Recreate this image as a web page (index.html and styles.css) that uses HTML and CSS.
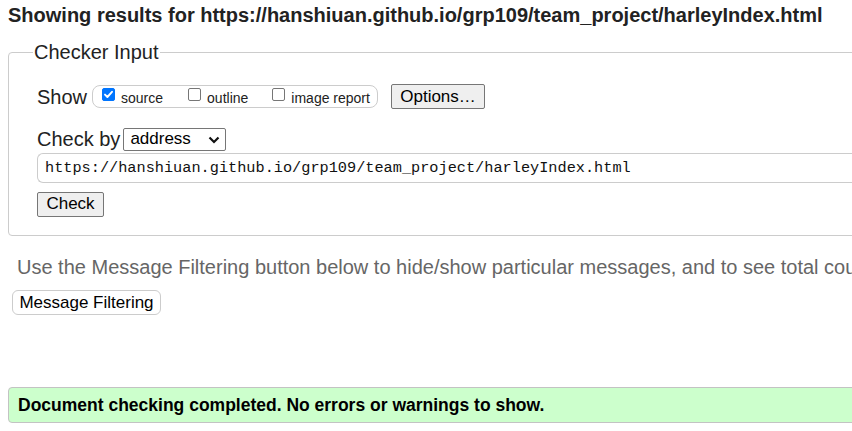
FILE: index.html
```html
<!DOCTYPE html>
<html lang="en">
<head>
<meta charset="utf-8">
<title>Showing results for https://hanshiuan.github.io/grp109/team_project/harleyIndex.html</title>
<link rel="stylesheet" href="styles.css">
</head>
<body>
<div class="page">
  <h2 class="results-title">Showing results for https://hanshiuan.github.io/grp109/team_project/harleyIndex.html</h2>
  <form class="checker">
    <fieldset class="checker-fs">
      <legend class="checker-legend">Checker Input</legend>
      <div class="row row-show">
        <span class="row-label">Show</span>
        <div class="show-group">
          <label class="opt opt-source"><span class="cb cb-on"><svg viewBox="0 0 13 13" width="13" height="13"><path d="M3 6.6 L5.4 9 L10 3.8" fill="none" stroke="#fff" stroke-width="1.9" stroke-linecap="round" stroke-linejoin="round"/></svg></span>source</label>
          <label class="opt opt-outline"><span class="cb"></span>outline</label>
          <label class="opt opt-image"><span class="cb"></span>image report</label>
        </div>
        <button type="button" class="btn btn-options">Options…</button>
      </div>
      <div class="row row-by">
        <span class="row-label">Check by</span>
        <div class="select"><span>address</span><svg class="chev" viewBox="0 0 12 8" width="12" height="8"><path d="M1.5 1.5 L6 6 L10.5 1.5" fill="none" stroke="#111" stroke-width="2.2"/></svg></div>
      </div>
      <div class="url-input">https://hanshiuan.github.io/grp109/team_project/harleyIndex.html</div>
      <div class="row row-check">
        <button type="button" class="btn btn-check">Check</button>
      </div>
    </fieldset>
  </form>
  <p class="filter-note">Use the Message Filtering button below to hide/show particular messages, and to see total counts of errors and warnings.</p>
  <button type="button" class="btn-filter">Message Filtering</button>
  <div class="success">Document checking completed. No errors or warnings to show.</div>
</div>
</body>
</html>
```
FILE: styles.css
```css
html, body {
  margin: 0;
  padding: 0;
  background: #fff;
  overflow: hidden;
}
body {
  font-family: "Liberation Sans", Arial, sans-serif;
  color: #222;
}
.page {
  width: 1100px;
  padding: 4px 0 0 8px;
}
.results-title {
  margin: 0;
  font-size: 20px;
  line-height: 23px;
  font-weight: bold;
  color: #222;
  white-space: nowrap;
}
.checker {
  margin: 14px 0 0 0;
}
.checker-fs {
  margin: 0;
  border: 1px solid #ccc;
  border-radius: 4px;
  padding: 0 0 19px 28px;
  min-width: 0;
}
.checker-legend {
  margin-left: -4px;
  padding: 0 1px;
  font-size: 20px;
  line-height: 22px;
  color: #222;
}
.row {
  display: flex;
  align-items: center;
}
.row-label {
  font-size: 20px;
  line-height: 22px;
  color: #222;
}
.row-show {
  margin-top: 21px;
  height: 25px;
}
.show-group {
  margin-left: 5px;
  height: 23px;
  box-sizing: border-box;
  border: 1px solid #ccc;
  border-radius: 8px;
  display: flex;
  align-items: center;
  padding: 0 0 0 9px;
  width: 286px;
}
.opt {
  display: flex;
  align-items: center;
  font-size: 14px;
  color: #222;
  line-height: 16px;
  padding-top: 2px;
}
.opt-source { margin-right: 25px; }
.opt-outline { margin-right: 24px; }
.cb {
  width: 13px;
  height: 13px;
  box-sizing: border-box;
  border: 1px solid #767676;
  border-radius: 2px;
  background: #fff;
  margin-right: 6px;
  margin-top: -6px;
  display: inline-flex;
}
.cb-on {
  background: #0075ff;
  border-color: #0075ff;
}
.cb svg { display: block; margin: -1px; }
.btn {
  font-family: "Liberation Sans", Arial, sans-serif;
  background: #efefef;
  border: 1px solid #767676;
  border-radius: 2px;
  color: #000;
  padding: 0;
  box-sizing: border-box;
}
.btn-options {
  margin-left: 13px;
  width: 94px;
  height: 25px;
  font-size: 17px;
}
.row-by {
  margin-top: 19px;
  height: 22px;
}
.select {
  margin-left: 3px;
  width: 103px;
  height: 23px;
  box-sizing: border-box;
  border: 1px solid #767676;
  border-radius: 2px;
  display: flex;
  align-items: center;
  justify-content: space-between;
  padding: 0 5px 0 6px;
  font-size: 17px;
  color: #000;
}
.chev { margin-top: 1px; }
.url-input {
  margin-top: 3px;
  height: 30px;
  box-sizing: border-box;
  border: 1px solid #ccc;
  border-right: none;
  border-radius: 6px 0 0 6px;
  padding: 0 0 0 7px;
  display: flex;
  align-items: center;
  font-family: "Liberation Mono", "DejaVu Sans Mono", monospace;
  font-size: 15.25px;
  color: #111;
  white-space: nowrap;
}
.row-check {
  margin-top: 9px;
  height: 24px;
}
.btn-check {
  width: 67px;
  height: 25px;
  font-size: 17px;
}
.filter-note {
  margin: 20px 0 0 9px;
  font-size: 20px;
  line-height: 23px;
  color: #666;
  white-space: nowrap;
}
.btn-filter {
  display: block;
  margin: 11px 0 0 4px;
  height: 25px;
  width: 149px;
  box-sizing: border-box;
  background: #fff;
  border: 1px solid #ccc;
  border-radius: 6px;
  font-family: "Liberation Sans", Arial, sans-serif;
  font-size: 17px;
  color: #000;
  padding: 0;
}
.success {
  margin-top: 72px;
  height: 36px;
  box-sizing: border-box;
  background: #ccffcc;
  border: 1px solid #c3c3c3;
  border-radius: 4px;
  padding: 0 0 0 9px;
  display: flex;
  align-items: center;
  font-size: 17.5px;
  font-weight: bold;
  color: #000;
}
```
